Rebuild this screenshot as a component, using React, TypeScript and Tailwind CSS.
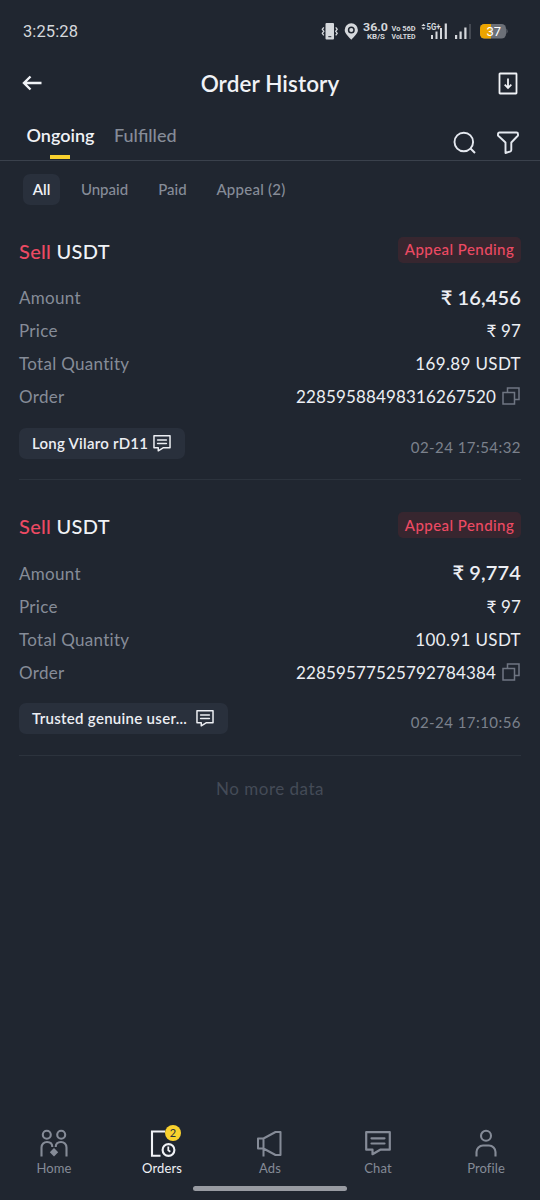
import { useState, type ReactNode } from 'react';

interface Order {
  id: string;
  amount: string;
  quantity: string;
  user: string;
  userClass: string;
  date: string;
}

const orders: Order[] = [
  {
    id: '22859588498316267520',
    amount: '16,456',
    quantity: '169.89',
    user: 'Long Vilaro rD11',
    userClass: 'w-[166px] tracking-[0.25px]',
    date: '02-24 17:54:32',
  },
  {
    id: '22859577525792784384',
    amount: '9,774',
    quantity: '100.91',
    user: 'Trusted genuine user...',
    userClass: 'w-[209px] tracking-[0.3px]',
    date: '02-24 17:10:56',
  },
];

function ChatIcon({ className }: { className: string }) {
  return (
    <svg viewBox="0 0 26 25" className={className} fill="none" stroke="currentColor" strokeWidth="2.2" strokeLinejoin="round" strokeLinecap="round">
      <path d="M1.2 1.2h23.6v17.5H15.2L7.5 23.2v-4.5H1.2z" />
      <path d="M6.5 7.3h13M6.5 12.5h13" />
    </svg>
  );
}

function StatusBar() {
  return (
    <div className="flex h-[62px] items-center pl-[23px] pr-[32px] text-[#d5d8dc]">
      <span className="mt-[2px] font-[Roboto] text-[16.5px] tracking-[0.1px]">3:25:28</span>
      <svg viewBox="321 17 187 28" className="ml-auto h-7 w-[187px]" fill="currentColor">
        {/* vibrate */}
        <path d="M326.500 23h6.500a1 1 0 0 1 1 1v14.500a1 1 0 0 1-1 1h-6.500a1 1 0 0 1-1-1V24a1 1 0 0 1 1-1z" />
        <path d="M328.300 36.700h3" stroke="#202630" strokeWidth="1" />
        <path d="M323.800 27.300l-1.500 2 1.500 2-1.500 2 1.500 2M335.700 27.300l1.500 2-1.500 2 1.500 2-1.500 2" fill="none" stroke="currentColor" strokeWidth="1.3" />
        {/* location */}
        <path fillRule="evenodd" d="M351.300 23.300a6.600 6.600 0 0 1 6.600 6.600c0 4-4.500 7-6.600 9.800-2.100-2.800-6.600-5.800-6.600-9.800a6.600 6.600 0 0 1 6.600-6.600zm0 3.200a3.500 3.500 0 1 0 0 7 3.500 3.500 0 0 0 0-7z" />
        <circle cx="351.3" cy="30" r="2" />
        <g className="font-[Roboto] font-bold">
          <text x="363" y="31.300" fontSize="11.500" textLength="25" lengthAdjust="spacingAndGlyphs">36.0</text>
          <text x="367" y="39" fontSize="8" textLength="18" lengthAdjust="spacingAndGlyphs">KB/S</text>
          <text x="391.500" y="30.800" fontSize="8" textLength="24" lengthAdjust="spacingAndGlyphs">Vo 56D</text>
          <text x="391.500" y="38.800" fontSize="8" textLength="24" lengthAdjust="spacingAndGlyphs">VoLTED</text>
          <text x="426.500" y="30" fontSize="8.500" textLength="14" lengthAdjust="spacingAndGlyphs">5G+</text>
        </g>
        <path d="M421.300 26l2.200-2.300 2.200 2.300zM421.300 27.500l2.200 2.300 2.200-2.300z" />
        <path d="M431 35h2v4h-2zM435.500 31.500h2v7.500h-2zM440 28h2v11h-2zM444.700 23.500h2.200v15.500h-2.200zM455 35h2.200v4h-2.200zM459.500 31.500h2.200v7.500h-2.200zM464.300 27.500h2.200v11.500h-2.200z" />
        <path d="M469 24h2v15h-2z" opacity="0.2" />
        {/* battery */}
        <rect x="480" y="24" width="26" height="14.500" rx="4.500" fill="#6c7078" />
        <path d="M484.500 24h6.500v14.500h-6.500a4.500 4.500 0 0 1-4.500-4.500v-5.500a4.500 4.500 0 0 1 4.500-4.500z" fill="#eba400" />
        <path d="M506.500 28.500q2 2.700 0 5.500z" fill="#6c7078" />
        <text x="486.500" y="35.900" fontSize="13" fill="#fff" textLength="14.500" lengthAdjust="spacingAndGlyphs" className="font-[Roboto]">37</text>
      </svg>
    </div>
  );
}

function Header() {
  return (
    <header className="flex h-[44px] items-center justify-between px-[22px] text-[#f0f2f6]">
      <svg viewBox="0 0 20 16" className="mt-[-2px] h-4 w-5" fill="none" stroke="currentColor" strokeWidth="2.4">
        <path d="M8.500 1.500L2 8l6.500 6.500M2 8h17.500" />
      </svg>
      <h1 className="text-[22.5px] font-semibold tracking-[0.1px]">Order History</h1>
      <svg viewBox="0 0 20 23" className="mt-[-2px] h-[23px] w-5" fill="none" stroke="currentColor" strokeWidth="1.8">
        <rect x="1.500" y="1.500" width="17" height="20" rx="0.500" />
        <path d="M10 6.500v9.500M6.700 12.700L10 16l3.300-3.300" />
      </svg>
    </header>
  );
}

function Row({ label, children }: { label: string; children: ReactNode }) {
  return (
    <div className="flex h-[33px] items-center justify-between">
      <span className="text-[17px] tracking-[0.3px] text-[#868c98]">{label}</span>
      <span className="flex items-center text-[17px] tracking-[0.15px] text-[#eceef3]">{children}</span>
    </div>
  );
}

function OrderCard({ order }: { order: Order }) {
  return (
    <article className="h-[275.5px] border-b border-[#2c333d] pt-[31px]">
      <div className="flex h-[32px] items-center justify-between">
        <h2 className="mt-[-2px] text-[20px] font-medium tracking-[0.3px] text-[#f0f2f6]">
          <span className="text-[#ec4a63]">Sell</span> USDT
        </h2>
        <span className="mt-[-4px] flex h-[26px] w-[123px] items-center justify-center rounded-[5px] bg-[#37262f] text-[15px] font-medium tracking-[0.45px] text-[#ec4a63]">
          Appeal Pending
        </span>
      </div>
      <div className="mt-[14px]">
        <Row label="Amount">
          <span className="mt-[-3px] text-[20px] font-semibold">₹ {order.amount}</span>
        </Row>
        <Row label="Price">₹ 97</Row>
        <Row label="Total Quantity">
          <span className="tracking-[0.35px]">{order.quantity} USDT</span>
        </Row>
        <Row label="Order">
          <span className="tracking-[0.14px]">{order.id}</span>
          <svg viewBox="0 0 18 18" className="mt-[-2px] ml-[6px] mr-px h-[18px] w-[18px]" fill="none" stroke="#6f7682" strokeWidth="1.5">
            <path d="M1 5.500h11.500V17H1zM5.500 5.500V1H17v11.500h-4.500" />
          </svg>
        </Row>
      </div>
      <div className="mt-[14px] flex justify-between">
        <button className={`flex h-[31px] items-center justify-between rounded-[7px] bg-[#29303c] pl-[13px] pr-[14px] text-[15px] font-semibold text-[#eceef3] ${order.userClass}`}>
          {order.user}
          <ChatIcon className="h-[17px] w-[18px]" />
        </button>
        <time className="mt-[8px] text-[15px] leading-[22px] tracking-[0.45px] text-[#7b818c]">{order.date}</time>
      </div>
    </article>
  );
}

function NavItem({ label, active, children }: { label: string; active?: boolean; children: ReactNode }) {
  return (
    <a className={active ? 'flex w-[108px] flex-col items-center text-[#f0f2f6]' : 'flex w-[108px] flex-col items-center text-[#858b97]'}>
      <div className="relative h-[30px]">{children}</div>
      <span className="mt-px text-[13px] leading-[16px] tracking-[0.1px]">{label}</span>
    </a>
  );
}

function BottomNav() {
  return (
    <nav className="mt-auto h-[82px] bg-[#202630] pt-[11px]">
      <div className="flex">
        <NavItem label="Home">
          <svg viewBox="0 0 28 28" className="h-7 w-7" fill="none" stroke="currentColor" strokeWidth="2.1">
            <circle cx="6.8" cy="5.8" r="4" />
            <circle cx="21.2" cy="5.8" r="4" />
            <path d="M1.500 27.500V18.500a5.500 5.500 0 0 1 5.500-5.500c3.500 0 5.300 1.800 5.300 5M26.500 27.500V18.500a5.500 5.500 0 0 0-5.500-5.500c-3.500 0-5.300 1.800-5.300 5" />
            <path d="M14 19l4.200 4.200-4.200 4.200L9.800 23.200z" fill="currentColor" stroke="none" />
          </svg>
        </NavItem>
        <NavItem label="Orders" active>
          <svg viewBox="0 0 28 28" className="h-7 w-7" fill="none" stroke="currentColor" strokeWidth="2.1">
            <path d="M17 2.500H4v24.300h8.500" />
            <circle cx="20.500" cy="21" r="5.900" />
            <path d="M20.300 17.500v3.800l2 1.500" strokeWidth="1.8" />
          </svg>
          <span className="absolute left-[17px] top-[-4px] flex h-4 w-4 items-center justify-center rounded-full bg-[#f9d12e] text-[11px] text-[#29303c]">2</span>
        </NavItem>
        <NavItem label="Ads">
          <svg viewBox="0 0 28 28" className="h-7 w-7" fill="none" stroke="currentColor" strokeWidth="2" strokeLinejoin="round">
            <path d="M2 9.500h5.500v10H2zM7.500 9.500L19.500 3h5v23h-5L7.500 19.500M7.500 19.500v8" />
          </svg>
        </NavItem>
        <NavItem label="Chat">
          <ChatIcon className="mt-[2px] h-[25px] w-[26px]" />
        </NavItem>
        <NavItem label="Profile">
          <svg viewBox="0 0 28 28" className="h-7 w-7" fill="none" stroke="currentColor" strokeWidth="2.1">
            <circle cx="14" cy="6.8" r="5" />
            <path d="M4.500 27.500V23a6.500 6.500 0 0 1 6.500-6.500h6a6.500 6.500 0 0 1 6.500 6.500v4.500" />
          </svg>
        </NavItem>
      </div>
      <div className="mx-auto mt-[10px] h-[5px] w-[154px] rounded-full bg-[#989ba2]" />
    </nav>
  );
}

export default function App() {
  const [filter, setFilter] = useState('All');

  const chip = (name: string) =>
    filter === name ? 'rounded-[7px] bg-[#29303c] text-[#f0f2f6] font-semibold' : 'text-[#868c98] font-medium';

  return (
    <div className="flex h-[1200px] w-[540px] flex-col overflow-hidden bg-[#202630] font-[Lato,'Liberation_Sans',sans-serif]">
      <StatusBar />
      <Header />
      <div className="flex h-[54.5px] items-start justify-between border-b border-[#3a414c] pl-[27px] pr-[21px]">
        <div className="flex gap-[20px] text-[18px] leading-[26px]">
          <button className="flex h-[53px] w-[67px] flex-col items-center pt-[16px] font-semibold text-[#f0f2f6]">
            Ongoing
            <span className="mt-[7px] mr-px h-1 w-5 bg-[#f9d12e]" />
          </button>
          <button className="h-[53px] pb-[11px] pt-[16px] font-medium text-[#868c98]">Fulfilled</button>
        </div>
        <div className="mt-[25px] flex gap-[21px] text-[#e4e8ef]">
          <svg viewBox="0 0 23 23" className="h-[23px] w-[23px]" fill="none" stroke="currentColor" strokeWidth="1.9">
            <circle cx="10.8" cy="11" r="9.3" />
            <path d="M17.500 17.500l4.500 4.500" />
          </svg>
          <svg viewBox="0 0 22 23" className="h-[23px] w-[22px]" fill="none" stroke="currentColor" strokeWidth="1.9" strokeLinejoin="round">
            <path d="M2.500 1.500h17a1.500 1.500 0 0 1 1.500 1.500v1.500l-6.700 7v7.500a1.500 1.500 0 0 1-.8 1.300L8.500 22V11.500L1 4.500V3a1.500 1.500 0 0 1 1.500-1.500z" />
          </svg>
        </div>
      </div>
      <div className="mt-[13px] flex h-[31px] gap-[20px] pl-[23px] text-[15px]">
        <button onClick={() => setFilter('All')} className={`w-[37px] ${chip('All')}`}>All</button>
        <button onClick={() => setFilter('Unpaid')} className={`w-[49px] ${chip('Unpaid')}`}>Unpaid</button>
        <button onClick={() => setFilter('Paid')} className={`ml-[9px] w-[29px] ${chip('Paid')}`}>Paid</button>
        <button onClick={() => setFilter('Appeal')} className={`ml-[9px] w-[70px] whitespace-nowrap tracking-[0.25px] ${chip('Appeal')}`}>Appeal (2)</button>
      </div>
      <main className="px-[19px]">
        {orders.map((order) => (
          <OrderCard key={order.id} order={order} />
        ))}
        <p className="mt-[20px] text-center text-[17px] tracking-[0.5px] text-[#444b57]">No more data</p>
      </main>
      <BottomNav />
    </div>
  );
}
